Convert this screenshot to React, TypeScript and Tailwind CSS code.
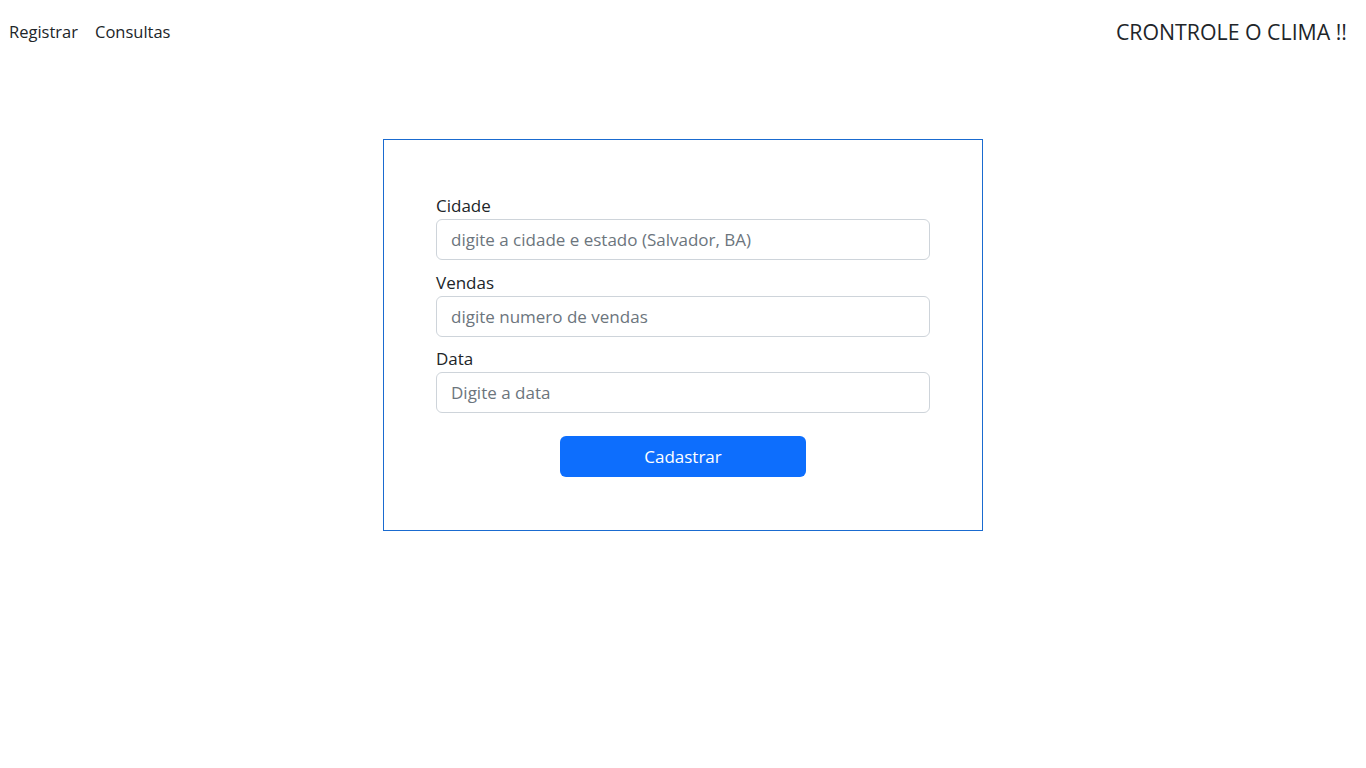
export default function App() {
  return (
    <div className="min-h-screen bg-white text-[#212529]" style={{ fontFamily: '"Open Sans", "Noto Sans", sans-serif' }}>
      {/* NAV */}
      <nav className="flex items-center justify-between h-[64px] pl-[9px] pr-[19px]">
        <div className="flex items-center gap-[17px] text-[16.5px]">
          <a className="cursor-pointer">Registrar</a>
          <a className="cursor-pointer">Consultas</a>
        </div>
        <span className="text-[21.3px]">CRONTROLE O CLIMA !!</span>
      </nav>

      {/* FORMULARIO */}
      <div className="flex justify-center pt-[75px]">
        <form className="w-[600px] border border-[#1a6bd0] px-[52px] pt-[54px] pb-[53px]">
          <label className="block text-[17px] leading-[24px] pb-[1px]">Cidade</label>
          <input
            className="block w-full h-[41px] border border-[#ced4da] rounded-[6px] px-[14px] text-[17px] placeholder:text-[#6c757d] outline-none"
            placeholder="digite a cidade e estado (Salvador, BA)"
          />

          <label className="block text-[17px] leading-[24px] pb-[1px] mt-[11px]">Vendas</label>
          <input
            className="block w-full h-[41px] border border-[#ced4da] rounded-[6px] px-[14px] text-[17px] placeholder:text-[#6c757d] outline-none"
            placeholder="digite numero de vendas"
          />

          <label className="block text-[17px] leading-[24px] pb-[1px] mt-[10px]">Data</label>
          <input
            className="block w-full h-[41px] border border-[#ced4da] rounded-[6px] px-[14px] text-[17px] placeholder:text-[#6c757d] outline-none"
            placeholder="Digite a data"
          />

          <div className="flex justify-center mt-[23px]">
            <button
              type="button"
              className="w-[246px] h-[41px] bg-[#0d6efd] text-white rounded-[6px] text-[17px]"
            >
              Cadastrar
            </button>
          </div>
        </form>
      </div>
    </div>
  );
}
